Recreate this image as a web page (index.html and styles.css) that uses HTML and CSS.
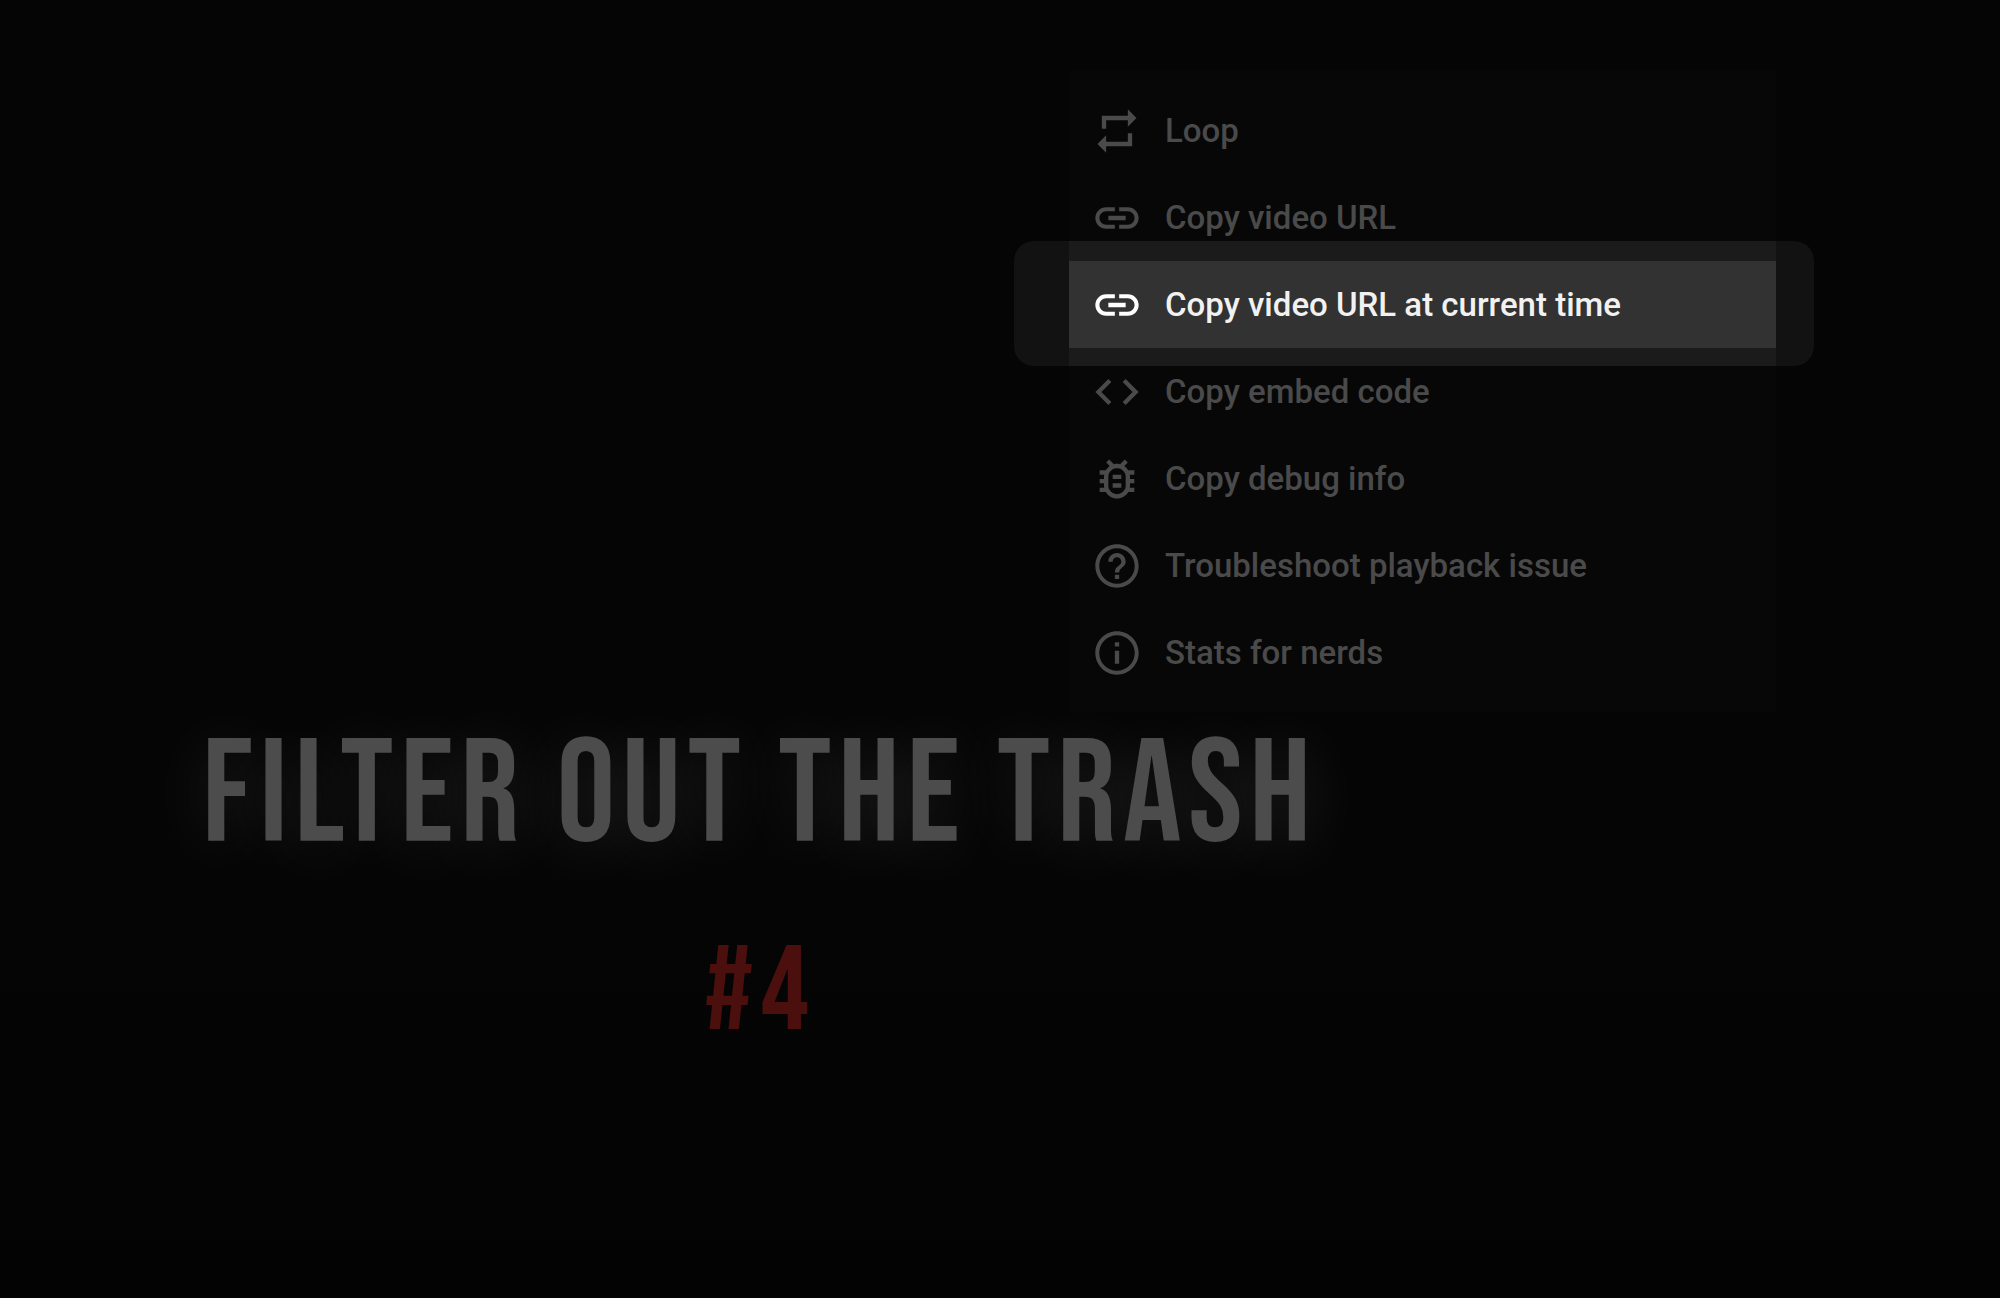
FILE: index.html
```html
<!DOCTYPE html>
<html lang="en">
<head>
  <meta charset="UTF-8">
  <meta name="viewport" content="width=device-width, initial-scale=1.0">
  <title>Filter out the trash</title>
  <link rel="stylesheet" href="styles.css">
</head>
<body>
  <main class="player">
    <div class="title-card">
      <h1>FILTER OUT THE TRASH</h1>
      <p class="number">#4</p>
    </div>

    <div class="menu">
      <button class="item" type="button">
        <svg class="icon" viewBox="0 0 24 24"><path d="M7 7h10v3l4-4-4-4v3H5v6h2V7zm10 10H7v-3l-4 4 4 4v-3h12v-6h-2v4z"/></svg>
        Loop
      </button>
      <button class="item" type="button">
        <svg class="icon" viewBox="0 0 24 24"><path d="M3.900 12c0-1.710 1.390-3.100 3.100-3.100h4V7H7c-2.760 0-5 2.240-5 5s2.240 5 5 5h4v-1.900H7c-1.710 0-3.100-1.390-3.100-3.100zM8 13h8v-2H8v2zm9-6h-4v1.900h4c1.710 0 3.100 1.390 3.100 3.100s-1.390 3.100-3.100 3.100h-4V17h4c2.760 0 5-2.240 5-5s-2.240-5-5-5z"/></svg>
        Copy video URL
      </button>
      <button class="item active" type="button">
        <svg class="icon" viewBox="0 0 24 24"><path d="M3.900 12c0-1.710 1.390-3.100 3.100-3.100h4V7H7c-2.760 0-5 2.240-5 5s2.240 5 5 5h4v-1.900H7c-1.710 0-3.100-1.390-3.100-3.100zM8 13h8v-2H8v2zm9-6h-4v1.900h4c1.710 0 3.100 1.390 3.100 3.100s-1.390 3.100-3.100 3.100h-4V17h4c2.760 0 5-2.240 5-5s-2.240-5-5-5z"/></svg>
        Copy video URL at current time
      </button>
      <button class="item" type="button">
        <svg class="icon" viewBox="0 0 24 24"><path d="M9.400 16.600L4.800 12l4.600-4.600L8 6l-6 6 6 6 1.400-1.400zm5.200 0l4.600-4.600-4.600-4.600L16 6l6 6-6 6-1.400-1.400z"/></svg>
        Copy embed code
      </button>
      <button class="item" type="button">
        <svg class="icon" viewBox="0 0 24 24"><path d="M20 8h-2.810c-.45-.78-1.070-1.450-1.820-1.960L17 4.410 15.590 3l-2.170 2.170C12.960 5.060 12.490 5 12 5s-.96.06-1.410.17L8.410 3 7 4.410l1.620 1.630C7.880 6.550 7.260 7.220 6.810 8H4v2h2.090c-.05.33-.09.66-.09 1v1H4v2h2v1c0 .34.04.67.09 1H4v2h2.810c1.040 1.790 2.970 3 5.190 3s4.150-1.210 5.190-3H20v-2h-2.090c.05-.33.09-.66.09-1v-1h2v-2h-2v-1c0-.34-.04-.67-.09-1H20V8zm-4 4v3c0 .22-.03.47-.07.7l-.1.65-.37.65c-.72 1.240-2.040 2-3.460 2s-2.740-.77-3.460-2l-.37-.64-.1-.65C8.030 15.480 8 15.230 8 15v-4c0-.23.03-.48.07-.7l.1-.65.37-.65c.3-.52.72-.97 1.210-1.310l.57-.39.74-.18c.31-.08.63-.12.940-.12.32 0 .63.04.95.12l.68.16.61.42c.5.34.91.78 1.210 1.310l.38.65.1.65c.04.22.07.47.07.69v1zm-6 2h4v2h-4v-2zm0-4h4v2h-4v-2z"/></svg>
        Copy debug info
      </button>
      <button class="item" type="button">
        <svg class="icon" viewBox="0 0 24 24"><path d="M11 18h2v-2h-2v2zm1-16C6.480 2 2 6.480 2 12s4.480 10 10 10 10-4.480 10-10S17.520 2 12 2zm0 18.200c-4.520 0-8.200-3.680-8.200-8.200S7.480 3.800 12 3.800s8.200 3.680 8.200 8.200-3.680 8.200-8.200 8.200zM12 6c-2.210 0-4 1.790-4 4h2c0-1.100.9-2 2-2s2 .9 2 2c0 2-3 1.750-3 5h2c0-2.250 3-2.500 3-5 0-2.210-1.790-4-4-4z"/></svg>
        Troubleshoot playback issue
      </button>
      <button class="item" type="button">
        <svg class="icon" viewBox="0 0 24 24"><path d="M11 7h2v2h-2V7zm0 4h2v6h-2v-6zm1-9C6.480 2 2 6.480 2 12s4.480 10 10 10 10-4.480 10-10S17.520 2 12 2zm0 18.200c-4.520 0-8.200-3.680-8.200-8.200S7.480 3.800 12 3.800s8.200 3.680 8.200 8.200-3.680 8.200-8.200 8.200z"/></svg>
        Stats for nerds
      </button>
    </div>
  </main>
</body>
</html>
```
FILE: styles.css
```css
body {
  margin: 0;
  background-color: #050505;
  font-family: Roboto, Arial, sans-serif;
}
.player {
  position: relative;
  min-height: 100vh;
  background: linear-gradient(#050505 70%, #030303);
}
.title-card {
  width: 76%;
  padding-top: 718px;
  text-align: center;
  font-family: "Bebas Neue", "Roboto Condensed", Roboto, sans-serif;
  letter-spacing: 7px;
}
h1 {
  margin: 0;
  font-size: 146px;
  font-weight: normal;
  line-height: 160px;
  white-space: nowrap;
  color: #4c4c4c;
  text-shadow: 0 8px 64px rgba(255, 255, 255, 0.12);
}
.number {
  margin: 35px 0 0;
  font-size: 120px;
  line-height: 160px;
  color: #4b100e;
}

/* context menu */
.menu {
  position: absolute;
  top: 71px;
  left: 1069px;
  width: 707px;
  box-sizing: border-box;
  padding: 16px 0;
  background-color: #070707;
  isolation: isolate;
}
.item {
  display: flex;
  align-items: center;
  gap: 22px;
  width: 100%;
  height: 87px;
  padding: 0 22px;
  border: 0;
  background: none;
  color: #4a4a4a;
  font-family: inherit;
  font-size: 33px;
  font-weight: 500;
  text-align: left;
  white-space: nowrap;
}
.icon {
  flex: none;
  width: 52px;
  height: 52px;
  fill: currentColor;
}

/* highlighted row and the lighter box around it */
.active {
  position: relative;
  background-color: #323232;
  box-shadow: 0 -20px #1b1b1b, 0 18px #1b1b1b;
  color: #f1f1f1;
}
.active .icon {
  fill: #fff;
}
.active::before {
  content: "";
  position: absolute;
  z-index: -1;
  inset: -20px -38px -18px -55px;
  border-radius: 20px;
  background-color: #121212;
}
```
